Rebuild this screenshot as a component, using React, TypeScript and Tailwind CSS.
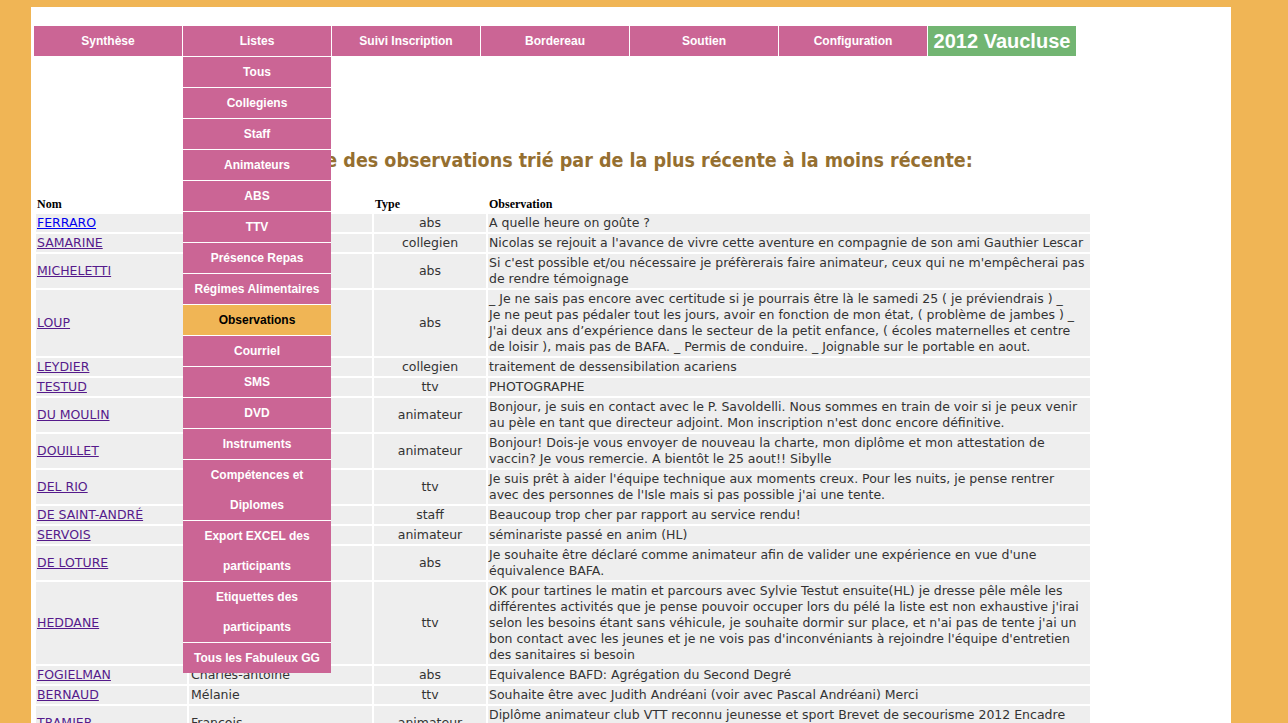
import React from "react";

const navItems = ["Synthèse", "Listes", "Suivi Inscription", "Bordereau", "Soutien", "Configuration"];

const dropItems: { label: string[]; active?: boolean }[] = [
  { label: ["Tous"] },
  { label: ["Collegiens"] },
  { label: ["Staff"] },
  { label: ["Animateurs"] },
  { label: ["ABS"] },
  { label: ["TTV"] },
  { label: ["Présence Repas"] },
  { label: ["Régimes Alimentaires"] },
  { label: ["Observations"], active: true },
  { label: ["Courriel"] },
  { label: ["SMS"] },
  { label: ["DVD"] },
  { label: ["Instruments"] },
  { label: ["Compétences et", "Diplomes"] },
  { label: ["Export EXCEL des", "participants"] },
  { label: ["Etiquettes des", "participants"] },
  { label: ["Tous les Fabuleux GG"] },
];

type Row = { nom: string; prenom: string; type: string; obs: string[]; fresh?: boolean };

const rows: Row[] = [
  { nom: "FERRARO", prenom: "Lucas", type: "abs", obs: ["A quelle heure on goûte ?"], fresh: true },
  { nom: "SAMARINE", prenom: "Nicolas", type: "collegien", obs: ["Nicolas se rejouit a l'avance de vivre cette aventure en compagnie de son ami Gauthier Lescar"] },
  {
    nom: "MICHELETTI",
    prenom: "Thomas",
    type: "abs",
    obs: ["Si c'est possible et/ou nécessaire je préfèrerais faire animateur, ceux qui ne m'empêcherai pas", "de rendre témoignage"],
  },
  {
    nom: "LOUP",
    prenom: "Claire",
    type: "abs",
    obs: [
      "_ Je ne sais pas encore avec certitude si je pourrais être là le samedi 25 ( je préviendrais ) _",
      "Je ne peut pas pédaler tout les jours, avoir en fonction de mon état, ( problème de jambes ) _",
      "J'ai deux ans d’expérience dans le secteur de la petit enfance, ( écoles maternelles et centre",
      "de loisir ), mais pas de BAFA. _ Permis de conduire. _ Joignable sur le portable en aout.",
    ],
  },
  { nom: "LEYDIER", prenom: "Julien", type: "collegien", obs: ["traitement de dessensibilation acariens"] },
  { nom: "TESTUD", prenom: "Sylvie", type: "ttv", obs: ["PHOTOGRAPHE"] },
  {
    nom: "DU MOULIN",
    prenom: "Pierre",
    type: "animateur",
    obs: [
      "Bonjour, je suis en contact avec le P. Savoldelli. Nous sommes en train de voir si je peux venir",
      "au pèle en tant que directeur adjoint. Mon inscription n'est donc encore définitive.",
    ],
  },
  {
    nom: "DOUILLET",
    prenom: "Sibylle",
    type: "animateur",
    obs: [
      "Bonjour! Dois-je vous envoyer de nouveau la charte, mon diplôme et mon attestation de",
      "vaccin? Je vous remercie. A bientôt le 25 aout!! Sibylle",
    ],
  },
  {
    nom: "DEL RIO",
    prenom: "Marc",
    type: "ttv",
    obs: [
      "Je suis prêt à aider l'équipe technique aux moments creux. Pour les nuits, je pense rentrer",
      "avec des personnes de l'Isle mais si pas possible j'ai une tente.",
    ],
  },
  { nom: "DE SAINT-ANDRÉ", prenom: "Anne", type: "staff", obs: ["Beaucoup trop cher par rapport au service rendu!"] },
  { nom: "SERVOIS", prenom: "Benoît", type: "animateur", obs: ["séminariste passé en anim (HL)"] },
  {
    nom: "DE LOTURE",
    prenom: "Paul",
    type: "abs",
    obs: ["Je souhaite être déclaré comme animateur afin de valider une expérience en vue d'une", "équivalence BAFA."],
  },
  {
    nom: "HEDDANE",
    prenom: "Karim",
    type: "ttv",
    obs: [
      "OK pour tartines le matin et parcours avec Sylvie Testut ensuite(HL) je dresse pêle mêle les",
      "différentes activités que je pense pouvoir occuper lors du pélé la liste est non exhaustive j'irai",
      "selon les besoins étant sans véhicule, je souhaite dormir sur place, et n'ai pas de tente j'ai un",
      "bon contact avec les jeunes et je ne vois pas d'inconvéniants à rejoindre l'équipe d'entretien",
      "des sanitaires si besoin",
    ],
  },
  { nom: "FOGIELMAN", prenom: "Charles-antoine", type: "abs", obs: ["Equivalence BAFD: Agrégation du Second Degré"] },
  { nom: "BERNAUD", prenom: "Mélanie", type: "ttv", obs: ["Souhaite être avec Judith Andréani (voir avec Pascal Andréani) Merci"] },
  {
    nom: "TRAMIER",
    prenom: "François",
    type: "animateur",
    obs: ["Diplôme animateur club VTT reconnu jeunesse et sport Brevet de secourisme 2012 Encadre", "des sorties VTT pour les jeunes"],
  },
];

const bodyFont = { fontFamily: '"DejaVu Sans", Verdana, sans-serif' };

export default function App() {
  return (
    <div className="min-h-screen bg-[#f0b555] pt-[7px] pl-[31px]">
      <div className="flow-root w-[1200px] min-h-[716px] bg-white px-[3px] pt-[19px] pb-4">
        {/* Nav */}
        <div
          className="flex gap-px text-[12px] font-bold text-white"
          style={{ fontFamily: '"Liberation Sans", Arial, sans-serif' }}
        >
          {navItems.map((n) => (
            <div key={n} className="relative h-[30px] w-[148px] bg-[#cb6595] text-center leading-[30px]">
              {n}
              {n === "Listes" && (
                <div className="absolute left-0 top-[30px] z-10 w-[148px]">
                  {dropItems.map((d) => (
                    <div
                      key={d.label.join(" ")}
                      className={`border-t border-white text-center leading-[30px] ${
                        d.active ? "bg-[#f0b555] text-black" : "bg-[#cb6595] text-white"
                      }`}
                    >
                      {d.label.map((l, i) => (
                        <div key={i}>{l}</div>
                      ))}
                    </div>
                  ))}
                </div>
              )}
            </div>
          ))}
          <div className="h-[30px] w-[148px] bg-[#72b572] text-center text-[20px] leading-[30px] text-white">
            2012 Vaucluse
          </div>
        </div>

        {/* Heading */}
        <h1
          className="mt-[93px] text-center text-[19.5px] font-bold leading-[24px] text-[#956f30]"
          style={{ fontFamily: '"DejaVu Sans Condensed", "DejaVu Sans", Verdana, sans-serif' }}
        >
          Liste des observations trié par de la plus récente à la moins récente:
        </h1>

        {/* Table */}
        <table className="mt-[17px] table-fixed border-separate border-spacing-[2px] w-[1058px]">
          <thead>
            <tr
              className="text-left text-[12px] font-bold leading-[16px] text-black"
              style={{ fontFamily: '"Liberation Serif", "Times New Roman", serif' }}
            >
              <th className="w-[151px] px-px pt-[4px] pb-0 align-bottom">Nom</th>
              <th className="w-[183px] px-px pt-[4px] pb-0 align-bottom">Prénom</th>
              <th className="w-[112px] px-px pt-[4px] pb-0 align-bottom">Type</th>
              <th className="w-[602px] px-px pt-[4px] pb-0 align-bottom">Observation</th>
            </tr>
          </thead>
          <tbody className="text-[12.5px] leading-[16px] text-[#333333]" style={bodyFont}>
            {rows.map((r) => (
              <tr key={r.nom}>
                <td className="bg-[#eeeeee] p-px align-middle">
                  <a href="#" className={`underline ${r.fresh ? "text-[#0000ee]" : "text-[#551a8b]"}`}>
                    {r.nom}
                  </a>
                </td>
                <td className="bg-[#eeeeee] p-px pl-[2px] align-middle whitespace-nowrap">{r.prenom}</td>
                <td className="bg-[#eeeeee] p-px text-center align-middle">{r.type}</td>
                <td className="bg-[#eeeeee] p-px align-middle whitespace-nowrap">
                  {r.obs.map((l, i) => (
                    <React.Fragment key={i}>
                      {i > 0 && <br />}
                      {l}
                    </React.Fragment>
                  ))}
                </td>
              </tr>
            ))}
          </tbody>
        </table>
      </div>
    </div>
  );
}
